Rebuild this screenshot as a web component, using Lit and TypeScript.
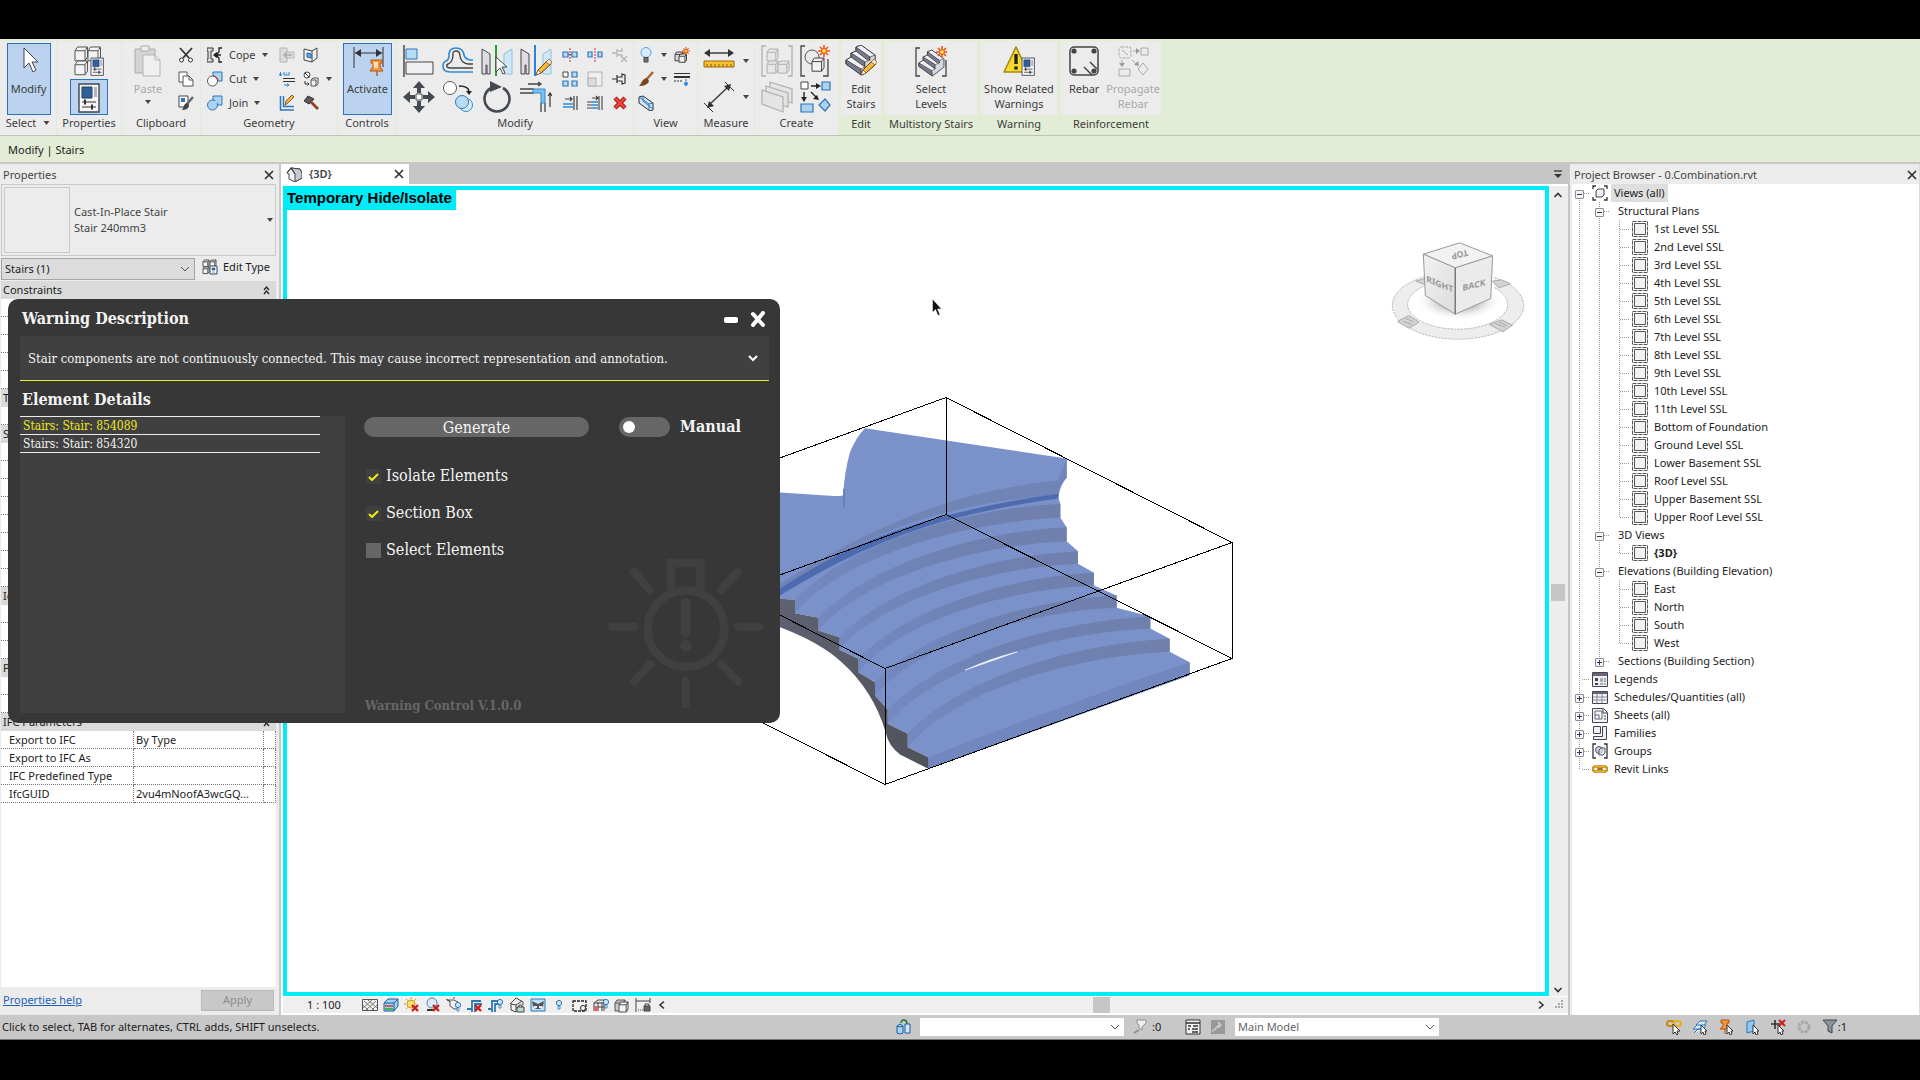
import { LitElement, html, svg, css, nothing, TemplateResult, SVGTemplateResult } from "lit";
import { customElement, state } from "lit/decorators.js";

const small = (b: SVGTemplateResult) => html`<svg class="s16" viewBox="0 0 16 16" aria-hidden="true">${b}</svg>`;
const big = (b: SVGTemplateResult) => html`<svg class="s32" viewBox="0 0 32 32" aria-hidden="true">${b}</svg>`;
const caret = html`<svg class="caret" viewBox="0 0 6 4" aria-hidden="true"><path d="M0 0h6L3 4z" fill="#444" /></svg>`;
const chevron = html`<svg class="chev" viewBox="0 0 10 6" aria-hidden="true"><path d="M1 1l4 4 4-4" fill="none" stroke="#555" /></svg>`;
const closeX = html`<svg class="x10" viewBox="0 0 10 10" aria-hidden="true"><path d="M1 1l8 8M9 1L1 9" stroke="#333" stroke-width="1.7" /></svg>`;

const burst = (x: number, y: number) => svg`<g transform="translate(${x} ${y})"><path d="M0-6V6M-6 0H6M-4-4L4 4M4-4L-4 4" stroke="#e8541c" stroke-width="1.6"/><circle r="2.4" fill="#ffe14a" stroke="#e8541c"/></g>`;
const redX = svg`<path d="M8 8l6 6M14 8l-6 6" stroke="#c8201c" stroke-width="2.4"/>`;
const tinyBulb = (x: number, y: number) => svg`<g transform="translate(${x} ${y})"><circle cx="3" cy="3" r="2.6" fill="#cfe6ff" stroke="#2f76b8"/><path d="M2 6h2v3H2z" fill="#fff" stroke="#2f76b8" stroke-width=".8"/></g>`;
const stairs = svg`<path d="M1 15l5-3V8l5-2V2l5-2 14 10v10L17 30 1 19z" fill="#f0f0f4" stroke="#33343a"/><path d="M1 15l15 9v6L1 19zM6 8l14 9v5L6 12zM11 2l14 10v5L11 6z" fill="#777a8a" stroke="#33343a" stroke-width=".8"/><path d="M16 24l4-2v-5l5-2v-3l5-2v10l-13 10z" fill="#d6d7de" stroke="#33343a" stroke-width=".6"/>`;
const pencil = svg`<path d="M16 30l2-5 9-9 4 3-10 9z" fill="#f7b93c" stroke="#6b3f12"/><path d="M16 30l2-5 3 3z" fill="#fff" stroke="#6b3f12" stroke-width=".6"/><path d="M26 17l3-3 3 3-2 3z" fill="#f4e2c8" stroke="#6b3f12" stroke-width=".6"/>`;
const cube = (x: number, y: number, s: number, f = "#f4f4f6", k = "#555") => svg`<path transform="translate(${x} ${y}) scale(${s})" d="M0 3l2-3h8v8l-2 3H0zM0 3h8v8M8 3l2-3" fill="${f}" stroke="${k}" stroke-width="${1 / s}"/>`;
const sheet = (x: number, y: number, s: number) => svg`<g transform="translate(${x} ${y}) scale(${s})"><path d="M0 0h20v28H0z" fill="#f6f6f8" stroke="#3f4450" stroke-width="1.4"/><path d="M3 3h10v11H3z" fill="#2f609a" stroke="#28405e"/><path d="M15 3h3v10h-3z" fill="#b2b6bc"/><path d="M3 18h14M3 23h14" stroke="#333" stroke-width="1.2"/><path d="M6 15.500v5M13 20.500v5" stroke="#333" stroke-width="2"/></g>`;

const icons = {
  arrow: big(svg`<path d="M11 3v20l5-5 4 9 3-2-4-8h6z" fill="#fff" stroke="#444"/>`),
  types: big(svg`${cube(2, 2, 1.25)}${cube(15, 2, 1.25)}${cube(2, 16, 1.25)}${sheet(18, 13, 0.62)}`),
  props: big(sheet(6, 2, 1)),
  paste: big(svg`<path d="M3 4h20v24H3z" fill="#d4d4d4" stroke="#aaa"/><path d="M9 1h8v5H9z" fill="#eee" stroke="#aaa"/><path d="M11 10h12l5 5v16H11z" fill="#f0f0f0" stroke="#b4b4b4"/><path d="M23 10v5h5" fill="none" stroke="#b4b4b4"/>`),
  scissors: small(svg`<path d="M2 1l9 10M14 1L5 11" stroke="#333" stroke-width="1.8"/><circle cx="3.500" cy="13" r="2" fill="#fff" stroke="#333"/><circle cx="12.500" cy="13" r="2" fill="#fff" stroke="#333"/>`),
  copy: small(svg`<path d="M1 1h8v10H1z" fill="#fff" stroke="#555"/><path d="M5 5h6l4 4v6H5z" fill="#fff" stroke="#555"/><path d="M11 5v4h4" fill="none" stroke="#555"/>`),
  match: small(svg`<path d="M1 1h9v11H1z" fill="#fff" stroke="#445"/><path d="M3 3h4v4H3z" fill="#2f76b8"/><path d="M15 2L9 9" stroke="#666" stroke-width="2.4"/><path d="M9 8l2 2c0 4-4 5-7 5 2-2 1-6 5-7z" fill="#444"/>`),
  cope: small(svg`<path d="M0 1h6v3H4v8h2v3H0v-3h1V4H0z" fill="#ddd" stroke="#333"/><path d="M15 1h-3v4l-3 3 3 3v4h3M14 8H7m3-2.500L7 8l3 2.500" fill="none" stroke="#222" stroke-width="1.3"/>`),
  cut: small(svg`<path d="M6 1h9v9H6z" fill="#a9d3ee" stroke="#2f76b8"/><circle cx="5.500" cy="10" r="5" fill="#fff" stroke="#555"/><path d="M6 5a5 5 0 0 1 5 5" fill="none" stroke="#d22"/>`),
  join: small(svg`<path d="M6 1h9v9H6z" fill="#a9d3ee" stroke="#2f76b8"/><circle cx="5.500" cy="10" r="5" fill="#a9d3ee" stroke="#2f76b8"/><path d="M7 6h3v3z" fill="#a9d3ee"/>`),
  cope2: small(svg`<path d="M1 1h7v4h7v6H8v4H1z" fill="#ddd" stroke="#b5b5b5"/><path d="M13 8H5m3-3L5 8l3 3" fill="none" stroke="#aaa" stroke-width="1.500"/>`),
  wallOpen: small(svg`<path d="M1 2l8 2 5-3v10l-5 4-8-2z" fill="#eef1f5" stroke="#444"/><path d="M4 6l4 1v4l-4-1z" fill="#6fb1ea" stroke="#1a5d9e"/><path d="M9 4v11" stroke="#444"/>`),
  split: small(svg`<path d="M1.500 1v4m-1.500-2l1.500 2L3 3M5 1v3h5V1M7 2h1" fill="none" stroke="#2a83dd"/><path d="M4 7.500h12M4 10.500h12" fill="none" stroke="#333"/><path d="M5 14h5m-2-1.500l2 1.500-2 1.500" fill="none" stroke="#2a83dd"/>`),
  shapes: small(svg`<circle cx="4" cy="4" r="3" fill="#fff" stroke="#444"/><path d="M2 2l4 4M2 10v3h4m-1.500-1.500L6 13l-1.500 1.500" fill="none" stroke="#333"/><path d="M8 9l2-2h5v6l-2 2H8zM8 9h5v6" fill="#eee" stroke="#555"/>`),
  wallEdit: small(svg`<path d="M1.500 1v14H15M4.500 1v10.500H15" fill="none" stroke="#2f76b8" stroke-width="1.500"/><path d="M6 10l1-4 6-6 2 2-6 6z" fill="#f4b43a" stroke="#553010" stroke-width=".7"/>`),
  hammer: small(svg`<path d="M1 6l4-5 6 3-5 5z" fill="#555a66" stroke="#333"/><path d="M7 6l8 8" stroke="#8a3f22" stroke-width="2.600"/>`),
  activate: big(svg`<path d="M2 2v21M31 2v20M3 8h27" stroke="#333" fill="none"/><path d="M3 8l6-4v8zM30 8l-6-4v8z" fill="#333"/><path d="M19 15h11v3h-2v4l3 4H18l3-4v-4h-2z" fill="#f49a3c" stroke="#b4500c"/><path d="M21 17h5v6h-4" fill="#ffd9a8"/><path d="M25 26v5" stroke="#b4500c" stroke-width="1.300"/>`),
  align: big(svg`<path d="M1 0v32" stroke="#222" stroke-width="1.200"/><path d="M3 4h11v10H3z" fill="#b9dcf5" stroke="#2f76b8"/><path d="M3 17h27v12H3z" fill="#f0f0f2" stroke="#444"/>`),
  offset: big(svg`<path d="M31 15h-3q-5-1-6-5-1-7-8-7T7 10q0 5-3 6-3 1-3 5 0 6 7 6h23" fill="none" stroke="#2f8ad2" stroke-width="1.600"/><path d="M31 19h-5q-7-1-8-8 0-5-4-5t-3 5q-1 7-5 8-2 1-1 3 1 1 4 1h22" fill="none" stroke="#444" stroke-width="1.400"/>`),
  mirror1: big(svg`<path d="M1 4l8 5v20H6V20H5v9H1z" fill="#dedee2" stroke="#444"/><path d="M31 4l-8 5v20h8z" fill="#cfe8f8" stroke="#8fc0e0"/><path d="M15 0v31" stroke="#2ba02b" stroke-width="2"/><path d="M15 12v15l4-4 3 6 2-1-3-6h5z" fill="#fff" stroke="#444"/>`),
  mirror2: big(svg`<path d="M1 4l8 5v20H6V20H5v9H1z" fill="#dedee2" stroke="#444"/><path d="M31 4l-8 5v20h8z" fill="#cfe8f8" stroke="#8fc0e0"/><path d="M15 0v31" stroke="#2a83dd" stroke-width="2"/>${pencil}`),
  move: big(svg`<path d="M16 0l6 7h-4v5h-4V7h-4zM16 32l6-7h-4v-5h-4v5h-4zM0 16l7-6v4h5v4H7v4zM32 16l-7-6v4h-5v4h5v4z" fill="#444952"/><path d="M13 13h6v6h-6z" fill="#fff" stroke="#444"/>`),
  copyShape: big(svg`<circle cx="8" cy="7" r="6.500" fill="#fff" stroke="#555"/><path d="M17 5c6 0 10 1 10 6" fill="none" stroke="#222" stroke-width="1.500"/><path d="M24 10h6l-3 4z" fill="#222"/><circle cx="24" cy="24" r="6.500" fill="#d8ecfa" stroke="#2f8ad2"/><circle cx="20" cy="21" r="6.500" fill="#b9dcf5" stroke="#2f76b8"/>`),
  rotate: big(svg`<path d="M10 7a12.500 12.500 0 1 0 12 0" fill="none" stroke="#444952" stroke-width="2.600"/><path d="M9 0l12 6-12 5z" fill="#444952"/>`),
  trim: big(svg`<path d="M0 8h15M0 12h15M22 31v-9M26 31v-9M9 3h13m-3-2l3 2-3 2M31 26V12m-2 3l2-3 2 3" transform="translate(-1 0)" fill="none" stroke="#444" stroke-width="1.300"/><path d="M13 8h12v14h-4V12h-8z" fill="#7cc0f0" stroke="#2f8ad2"/>`),
  split1: small(svg`<path d="M1 5h5v5H1zM10 5h5v5h-5zM6 7.500h4" fill="#b9dcf5" stroke="#2f76b8" stroke-width="1.200"/><path d="M8 1v14" stroke="#d22" stroke-dasharray="2 1"/>`),
  split2: small(svg`<path d="M1 5h4v5H1zM11 5h4v5h-4z" fill="#b9dcf5" stroke="#2f76b8" stroke-width="1.200"/><path d="M8 1v14" stroke="#d22" stroke-dasharray="2 1"/>`),
  unpin: small(svg`<path d="M0 6h5M5 2v8M5 4h5V1M5 8h5v3" fill="none" stroke="#b8b8b8" stroke-width="1.300"/><path d="M9 9l6 6M15 9l-6 6" stroke="#b8b8b8" stroke-width="1.600"/>`),
  array: small(svg`<path d="M1 1h5v5H1z" fill="#fff" stroke="#444"/><path d="M1 10h5v5H1zM10 1h5v5h-5zM10 10h5v5h-5z" fill="#b9dcf5" stroke="#2f76b8" stroke-width="1.200"/>`),
  scale: small(svg`<path d="M1 1h14v14H1z" fill="#efefef" stroke="#b0b0b0"/><path d="M1 7h8v8H1z" fill="#ddd" stroke="#b0b0b0"/>`),
  pin: small(svg`<path d="M0 8h5" stroke="#333"/><path d="M5 4v8M5 6h5V3l3 1v8l-3 1v-3H5" fill="#eee" stroke="#333" stroke-width="1.200"/>`),
  trimOne: small(svg`<path d="M3 4h7m-2-2l2 2-2 2M12 1v14M15 1v14" fill="none" stroke="#444" stroke-width="1.200"/><path d="M1 9h10M1 12h10" stroke="#2f8ad2" stroke-width="1.400"/>`),
  trimMany: small(svg`<path d="M5 3h6m-2-2l2 2-2 2M12 1v14M15 1v14M0 7h5M0 10h5M0 13h5" fill="none" stroke="#444" stroke-width="1.100"/><path d="M5 7h6M5 10h6M5 13h6" stroke="#2f8ad2" stroke-width="1.600"/>`),
  del: small(svg`<path d="M3 3l10 10M13 3L3 13" stroke="#8e1010" stroke-width="4.400"/><path d="M3 3l10 10M13 3L3 13" stroke="#f0403a" stroke-width="2.600"/>`),
  bulb: small(svg`<circle cx="8" cy="5.500" r="5" fill="#d4ecff" stroke="#5a9ed6"/><path d="M6 10.500h4V15H6z" fill="#777" stroke="#444"/>`),
  override: small(svg`${cube(1, 5, 0.8, "#d8d8dc", "#444")}${cube(5, 7, 0.75, "#eee", "#444")}<g transform="translate(12 4) scale(.65)">${burst(0, 0)}</g>`),
  brush: small(svg`<path d="M15 1L8 9" stroke="#b0692c" stroke-width="2.600"/><path d="M9 7l2 3c-1 4-6 5-10 5 3-2 2-7 8-8z" fill="#7a4420"/>`),
  linework: small(svg`<path d="M0 2.500h16" stroke="#333"/><path d="M0 6h16" stroke="#333" stroke-width="2"/><path d="M0 10h9" stroke="#333" stroke-dasharray="2 1"/><path d="M12 8v5m-2-1h4l-2 3z" fill="#2a83dd" stroke="#2a83dd"/>`),
  box3d: small(svg`<path d="M1 2l4-1 10 7v7l-3 1L1 8z" fill="#cfe4f6" stroke="#333"/><path d="M1 2l10 7v6M5 1v5l10 8M11 9l4-1" fill="none" stroke="#2f76b8"/>`),
  measure: big(svg`<path d="M3 8h26" stroke="#333" stroke-width="1.400"/><path d="M1 8l6-4v8zM31 8l-6-4v8z" fill="#333"/><path d="M1 16h30v6H1z" fill="#f6c12c" stroke="#9a6a10"/><path d="M4 19v3M8 19v3M12 19v3M16 19v3M20 19v3M24 19v3M28 19v3" stroke="#8a5a10"/>`),
  dim: big(svg`<path d="M6 24L25 6" stroke="#333" stroke-width="1.300"/><path d="M4 27l2-7 5 5zM28 3l-2 7-5-5z" fill="#333"/><path d="M1 22l9 9M22 1l9 9" stroke="#333"/>`),
  group: big(svg`<path d="M5 1H1v30h4M27 1h4v30h-4" fill="none" stroke="#b0b0b0" stroke-width="1.300"/>${cube(6, 4, 1.1, "#e6e6e6", "#b0b0b0")}${cube(6, 16, 1.1, "#e6e6e6", "#b0b0b0")}${cube(17, 16, 1.1, "#e6e6e6", "#b0b0b0")}`),
  newGroup: big(svg`<path d="M6 1H2v30h4M24 31h5V14" fill="none" stroke="#444" stroke-width="1.300"/><circle cx="13" cy="12" r="7" fill="#e8eaee" stroke="#555"/>${cube(13, 13, 1.2, "#f2f2f4", "#444")}${burst(25, 6)}`),
  parts: big(svg`<g fill="#e4e4e4" stroke="#b0b0b0" stroke-width="1.200"><path d="M9 1l22 7v14L9 15z"/><path d="M5 5l22 7v14L5 19z"/><path d="M1 9l21 7v15L1 23z"/></g>`),
  similar: big(svg`<path d="M2 1h7v7H2z" fill="#fff" stroke="#444"/><path d="M23 1h8v8h-8zM2 23h12v8H2zM26 18l5 6-5 6-6-6z" fill="#a9d3ee" stroke="#2f76b8" stroke-width="1.200"/><path d="M12 5h7M5 11v7M12 11l5 5" stroke="#222" stroke-width="1.400"/><path d="M17 2l5 3-5 3zM2 16h6l-3 5zM20 19l-6-1 4-4z" fill="#222"/>`),
  editStairs: big(svg`${stairs}${pencil}`),
  levels: big(svg`<path d="M5 3H1v28h4M27 31h4V15" fill="none" stroke="#444" stroke-width="1.300"/><g transform="translate(3 5) scale(.86)">${stairs}</g>${burst(27, 7)}`),
  warning: big(svg`<path d="M13 2L1 27h24z" fill="#f8d92c" stroke="#a58a10" stroke-width="1.600" stroke-linejoin="round"/><path d="M13 9v10M13 21.500v3" stroke="#222" stroke-width="3.400"/>${sheet(19, 13, 0.62)}`),
  rebar: big(svg`<rect x="2" y="2" width="28" height="28" rx="4" fill="none" stroke="#444" stroke-width="1.500"/><circle cx="6" cy="6" r="2.600" fill="#444"/><circle cx="26" cy="6" r="2.600" fill="#444"/><circle cx="6" cy="26" r="2.600" fill="#444"/><circle cx="26" cy="26" r="2.600" fill="#444"/><path d="M22 17l7 7M16 22l8 8" stroke="#444" stroke-width="1.500"/>`),
  propagate: big(svg`<g fill="none" stroke="#aaa"><rect x="2" y="2" width="12" height="11" rx="2" stroke-dasharray="3 1"/><path d="M5 5l6 5M24 3h7v7h-7zM2 24h11v7H2zM26 18l5 6-5 6-5-6zM16 6h4M5 15v4M15 15l5 5"/></g><path d="M19 3l4 3-4 3zM2 18h6l-3 4zM22 21l-5-1 4-4z" fill="#999"/>`),
  house: small(svg`<path d="M1 7l4-5 9 1 2 4v5l-7 4-6-3V8z" fill="#f2f3f5" stroke="#444"/><path d="M5 2l4 6v8l7-4V7l-2-4z" fill="#c6cad2" stroke="#444"/><path d="M1 7l4-5 4 6" fill="none" stroke="#444" stroke-width="1.200"/>`),
  editType: small(svg`${cube(1, 1, 0.6)}${cube(8, 1, 0.6)}${cube(1, 8, 0.6)}<path d="M8 7h7v8H8z" fill="#fff" stroke="#345"/><path d="M10 9h3v2h-3zM10 13h3" fill="#2f609a" stroke="#2f609a" stroke-width=".6"/>`),
};

const viewIcons: TemplateResult[] = [
  small(svg`<path d="M.5 2.500h15v11H.5z" fill="#f4f4f4" stroke="#555"/><path d="M2 4l10 9M6 3l9 8M1 8l5 5M14 4L4 13M10 3L1 11M15 8l-5 5" stroke="#777"/>`),
  small(svg`<path d="M1 6l4-4h10v7l-4 5H1z" fill="#9ed3ee" stroke="#1a5d9e"/><path d="M1 6h10v8M11 6l4-4" fill="none" stroke="#1a5d9e"/><path d="M2 9h8" stroke="#d33" stroke-width="1.500"/><path d="M2 12h8" stroke="#2a2" stroke-width="1.500"/>`),
  small(svg`<circle cx="7" cy="7" r="4" fill="#ffe070" stroke="#d8941c"/><path d="M7 0v2M0 7h2M2 2l1.500 1.500M12 2l-1.500 1.500M2 12l1.500-1.500" stroke="#d8941c"/>${redX}`),
  small(svg`<circle cx="7" cy="6" r="5" fill="#dcebf8" stroke="#4a7fae"/><path d="M2 13h7" stroke="#333" stroke-width="2"/>${redX}`),
  small(svg`<path d="M1 3l3 1v5l4 3h4V5L8 3zM0 2l4 3M7 1h2" fill="#eee" stroke="#555"/>${tinyBulb(9, 5)}`),
  small(svg`<path d="M5 15V4h9M8 15V7h7M0 12h5" fill="none" stroke="#2f76b8" stroke-width="1.800"/>${redX}`),
  small(svg`<path d="M4 15V4h8M7 15V7h4M0 12h4" fill="none" stroke="#2f76b8" stroke-width="1.800"/>${tinyBulb(9, 2)}`),
  small(svg`<path d="M1 7l6-6 7 4v3M2 7v6l5 2V8L13 4M2 7l5 1" fill="#eee" stroke="#444"/><path d="M8 10h7v5H8z" fill="#c4d8c8" stroke="#444"/><path d="M10 10V8h3v2" fill="none" stroke="#444"/>`),
  small(svg`<path d="M1 2h14v12H1z" fill="#bfe0f5" stroke="#2f76b8"/><path d="M2 4l6 3 6-3-1 5-3 3H6L3 9z" fill="#555"/><path d="M4 9h3v2H4zM9 9h3v2H9z" fill="#eee"/>`),
  small(svg`${tinyBulb(5, 3)}`),
  small(svg`<path d="M1 4h13v10H1z" fill="#f2f2f2" stroke="#222" stroke-dasharray="3 1" stroke-width="1.300"/><circle cx="11" cy="11" r="2.500" fill="#fff" stroke="#222"/>`),
  small(svg`<path d="M1 6l4-3h8M1 6v8M5 5v9M9 5v9M1 6h10v8M1 10h10" fill="none" stroke="#444"/><path d="M1 10h4v4H1z" fill="#d66" />${tinyBulb(10, 2)}`),
  small(svg`${cube(1, 3, 1, "#ccc")}${cube(5, 5, 0.9, "#f2f2f2")}`),
  small(svg`<path d="M1 1v14M15 1v5M1 4h14" fill="none" stroke="#444"/><path d="M3 13h5" stroke="#444" stroke-dasharray="1 1"/><path d="M9 9h6v5H9z" fill="#666" stroke="#444"/><path d="M10 9V7h4v2" fill="none" stroke="#444"/>`),
];

const pickIcons: TemplateResult[] = [
  small(svg`<rect x="1" y="2" width="7" height="5" rx="2.500" fill="none" stroke="#c88a10" stroke-width="2"/><rect x="8" y="2" width="7" height="5" rx="2.500" fill="none" stroke="#e8b020" stroke-width="2"/><path d="M7 5v10l2-2 2 3 1-1-1-3h3z" fill="#fff" stroke="#333"/>`),
  small(svg`<path d="M1 10l4-4h9l-3 4zM2 14l4-4h6M4 6l4-4h7l-3 4" fill="#dceefa" stroke="#2f76b8"/><path d="M9 6v9l2-2 1 3 2-1-1-3h2z" fill="#fff" stroke="#333"/>`),
  small(svg`<path d="M3 1h8v3h-2v3l3 3H2l3-3V4H3z" fill="#f49a3c" stroke="#b4500c"/><path d="M7 10v5" stroke="#b4500c"/><path d="M9 6v9l2-2 1 3 2-1-1-3h2z" fill="#fff" stroke="#333"/>`),
  small(svg`<path d="M3 3l7-2v11l-7 2z" fill="#8fc8f0" stroke="#2f76b8"/><path d="M9 6v9l2-2 1 3 2-1-1-3h2z" fill="#fff" stroke="#333"/>`),
  small(svg`<path d="M5 1v9M1 5h9" stroke="#333" stroke-width="1.600"/><path d="M9 1l6 6M15 1L9 7" stroke="#c8201c" stroke-width="2"/><path d="M8 6v9l2-2 1 3 2-1-1-3h2z" fill="#fff" stroke="#333"/>`),
  small(svg`<circle cx="8" cy="8" r="5" fill="none" stroke="#a8a8a8" stroke-width="3" stroke-dasharray="3 1"/>`),
];

const treeIcons: Record<string, TemplateResult> = {
  views: small(svg`<path d="M4 1H1v3M12 1h3v3M4 15H1v-3M12 15h3v-3" fill="none" stroke="#333" stroke-width="1.300"/><path d="M4 6l2-2h6v6l-2 2H4z" fill="#eee" stroke="#444"/>`),
  leaf: small(svg`<path d="M.5.5h15v15H.5z" fill="none" stroke="#555" stroke-dasharray="4 1"/><path d="M2.500 2.500h11v11h-11z" fill="#f2f2f2" stroke="#555"/>`),
  legends: small(svg`<path d="M.5 1.500h15v14H.5z" fill="#eee" stroke="#445"/><path d="M1 2h14v3H1z" fill="#667"/><path d="M3 7h3v3H3zM3 12h3v2H3z" fill="#445"/><path d="M8 8h6M8 10h6M8 13h6" stroke="#667" stroke-dasharray="3 1"/>`),
  schedules: small(svg`<path d="M.5 2.500h15v12H.5z" fill="#f4f4f4" stroke="#445"/><path d="M1 3h14v2H1z" fill="#667"/><path d="M1 8h14M1 11h14M5 5v9M10 5v9" stroke="#889"/>`),
  sheets: small(svg`<path d="M.5 1.500h11l4 4v10H.5z" fill="#f4f4f4" stroke="#445"/><path d="M3 4h7v8H3zM3 8h4v4" fill="none" stroke="#667"/><path d="M11 2v4h4M12 9h2M12 12h2" fill="none" stroke="#445"/>`),
  families: small(svg`<path d="M1.500 1.500h7v7h-7zM1.500 11.500h9v-10h4v13h-13z" fill="#eef0f3" stroke="#445"/>`),
  groups: small(svg`<path d="M4 1H1v14h3M12 1h3v14h-3" fill="none" stroke="#333" stroke-width="1.300"/><circle cx="7" cy="7" r="3.500" fill="#ccd" stroke="#556"/><path d="M7 7l2-2h4v5l-2 2H7z" fill="#dde" fill-opacity=".7" stroke="#556"/>`),
  links: small(svg`<rect x="1" y="5.500" width="8" height="5" rx="2.500" fill="none" stroke="#b87a08" stroke-width="2.400"/><rect x="7" y="5.500" width="8" height="5" rx="2.500" fill="none" stroke="#b87a08" stroke-width="2.400"/><rect x="1" y="5.500" width="8" height="5" rx="2.500" fill="none" stroke="#f2c030"/><rect x="7" y="5.500" width="8" height="5" rx="2.500" fill="none" stroke="#f2c030"/><path d="M5 8h6" stroke="#7a5208"/>`),
};

type Node = { t: string; cells: string; icon?: string; sel?: boolean; bold?: boolean };
const leaf = (t: string, last = false, bold = false): Node => ({ t, cells: last ? "vvl" : "vvt", icon: "leaf", bold });
const TREE: Node[] = [
  { t: "Views (all)", cells: "B", icon: "views", sel: true },
  { t: "Structural Plans", cells: "vM" },
  ...["1st", "2nd", "3rd", "4th", "5th", "6th", "7th", "8th", "9th", "10th", "11th"].map((n) => leaf(`${n} Level SSL`)),
  leaf("Bottom of Foundation"), leaf("Ground Level SSL"), leaf("Lower Basement SSL"), leaf("Roof Level SSL"), leaf("Upper Basement SSL"), leaf("Upper Roof Level SSL", true),
  { t: "3D Views", cells: "vM" }, leaf("{3D}", true, true),
  { t: "Elevations (Building Elevation)", cells: "vM" },
  ...["East", "North", "South"].map((n) => leaf(n)), leaf("West", true),
  { t: "Sections (Building Section)", cells: "vL" },
  { t: "Legends", cells: "t", icon: "legends" },
  { t: "Schedules/Quantities (all)", cells: "P", icon: "schedules" },
  { t: "Sheets (all)", cells: "P", icon: "sheets" },
  { t: "Families", cells: "P", icon: "families" },
  { t: "Groups", cells: "P", icon: "groups" },
  { t: "Revit Links", cells: "l", icon: "links" },
];

type Prop = { h?: string; n?: string; v?: string };
const blank = (n: number): Prop[] => Array.from({ length: n }, () => ({}));
const PROPS: Prop[] = [
  { h: "Constraints" }, ...blank(5), { h: "T" }, ...blank(1), { h: "S" }, ...blank(8), { h: "Id" }, ...blank(3), { h: "P" }, ...blank(2),
  { h: "IFC Parameters" }, { n: "Export to IFC", v: "By Type" }, { n: "Export to IFC As", v: "" }, { n: "IFC Predefined Type", v: "" }, { n: "IfcGUID", v: "2vu4mNoofA3wcGQ..." },
];

/* Tread risers: right end x, top, bottom; left end x, top, bottom. */
const RISERS = [
  [871, 370, 412, 75, 658, 698], [890, 440, 482, 145, 712, 750], [924, 512, 550, 208, 770, 808], [972, 577, 615, 265, 835, 875],
  [1040, 645, 682, 315, 905, 945], [1141, 708, 744, 353, 988, 1030], [1199, 775, 814, 413, 1060, 1100],
];
const riserPath = ([xr, t, b, xl, lt, lb]: number[]) => {
  const dx = xr - xl, dt = lt - t, db = lb - b;
  return `M${xr} ${t}C${xr - 0.38 * dx} ${t + 0.05 * dt} ${xr - 0.81 * dx} ${t + 0.44 * dt} ${xl} ${lt}V${lb}C${xr - 0.83 * dx} ${b + 0.44 * db} ${xr - 0.4 * dx} ${b + 0.05 * db} ${xr} ${b}Z`;
};

const scene = html`<svg class="scene" viewBox="287 190 1258 801" role="img" aria-label="3D view of the stair">
  <defs>
    <linearGradient id="riser" x1="0" x2="1"><stop offset="0" stop-color="#7389c0" /><stop offset=".45" stop-color="#6e82b3" /><stop offset="1" stop-color="#7080ad" /></linearGradient>
    <linearGradient id="under" x1="0" x2="1" y1="0" y2="1"><stop offset="0" stop-color="#5f6373" /><stop offset="1" stop-color="#50525a" /></linearGradient>
    <radialGradient id="shade"><stop offset=".3" stop-color="#888" stop-opacity=".8" /><stop offset="1" stop-color="#fff" stop-opacity="0" /></radialGradient>
    <linearGradient id="face" x1="0" x2="1" y1="0" y2="1"><stop offset="0" stop-color="#f2f2f2" /><stop offset="1" stop-color="#dcdcdc" /></linearGradient>
  </defs>
  <g transform="translate(770 380) scale(.33333)">
    <path fill="#7a91ca" d="M-60 332L30 336 180 346Q205 348 219 345Q224 270 240 215Q258 170 285 143L890 234V292Q870 312 865 352L871 370V412L890 440V482L924 512V550L972 577V615L1040 645V682L1141 708V744L1199 775V814L1259 845V884L475 1165V1130L413 1100V1060L353 1030V988L315 945V905L265 875V835L208 808V770L145 750V712L75 698V658L-60 650Z" />
    <path fill="#7085bd" d="M890 234V292Q870 312 865 345L862 300Q880 262 890 234Z" />
    <path fill="#7084b5" d="M865 300Q700 315 530 368Q300 440 30 610V632Q300 450 530 395Q700 355 865 342Z" />
    <path fill="#4f6bb0" d="M865 340Q700 362 530 405Q250 475 30 625V645Q280 490 530 420Q700 375 865 354Z" />
    ${RISERS.map((r) => svg`<path fill="url(#riser)" d="${riserPath(r)}"/>`)}
    <path fill="#7187be" d="M1259 845Q900 965 475 1130V1165L1259 884Z" />
    <path fill="url(#under)" d="M-60 650L30 655 75 658V698L145 712V750L208 770V808L265 835V875L315 905V945L353 988V1030L413 1060V1100L475 1130V1165L390 1122Q355 1095 347 1055Q310 930 215 845Q150 785 30 740L-60 700Z" />
    <path d="M222 325V380" stroke="#5f76b0" stroke-width="4" />
    <path d="M585 869Q660 835 742 814Q670 840 585 869Z" fill="#fff" stroke="#e8eefc" stroke-width="2" />
  </g>
  <path d="M600 523L946 397L1232 542V658L885 784L600 640ZM600 523L885 668V784M885 668L1232 542M946 397V514M600 640L946 514L1232 658" fill="none" stroke="#000" stroke-width="1" shape-rendering="crispEdges" />
  <g transform="translate(1359 160) scale(.33333)">
    <path fill-rule="evenodd" fill="#ededed" stroke="#b8b8b8" stroke-width="3" stroke-dasharray="7 3" d="M100 435a197 101 0 1 0 394 0a197 101 0 1 0 -394 0zM146 432a150 74 0 1 0 300 0a150 74 0 1 0 -300 0z" />
    <path d="M195 330H405V400H195Z" fill="#fff" />
    <ellipse cx="300" cy="420" rx="130" ry="60" fill="url(#shade)" />
    <g fill="#d4d4d4" stroke="#aaa" stroke-width="3"><path d="M115 483l35-18 30 20-30 18zM392 492l36-14 32 16-28 20zM400 362l28-4 26 12-34 12zM170 362l28-8v18z" /><path d="M132 482l26 10M140 474l24 10M410 490l28 10M420 484l24 12" /></g>
    <path fill="#f2f2f2" stroke="#999" stroke-width="3" d="M193 281L302 247L401 286L289 322Z" />
    <path fill="url(#face)" stroke="#999" stroke-width="3" d="M193 281L289 322V461L199 405Z" />
    <path fill="#ebebeb" stroke="#999" stroke-width="3" d="M401 286L289 322V461L395 414Z" />
    <path d="M289 322V461" stroke="#777" stroke-width="4" />
    <g class="cubetext" fill="#999" text-anchor="middle"><text transform="translate(242 380) skewY(22)">RIGHT</text><text transform="translate(345 383) skewY(-14)">BACK</text><text transform="translate(300 273) rotate(166)">TOP</text></g>
  </g>
  <path d="M932.500 298.500v13.500l3-3 2.500 6 2-1-2.500-5.500h4z" fill="#111" stroke="#fff" stroke-width=".5" />
</svg>`;

@customElement("warning-dialog")
export class WarningDialog extends LitElement {
  @state() private picked = "854089";
  static styles = css`
    :host { display: block; color: #f4f4f4; background: #373737; border-radius: 10px; font-family: "DejaVu Serif Condensed", "DejaVu Serif", serif; }
    * { box-sizing: border-box; }
    .dialog { display: flex; flex-direction: column; height: 100%; padding: 0 11px 10px 12px; }
    .bar { display: flex; align-items: center; height: 37px; padding: 2px 0 0 2px; margin-right: -2px; }
    h2 { flex: 1; margin: 0; font-size: 16px; font-weight: bold; line-height: 24px; }
    button { font: inherit; color: inherit; border: 0; background: none; padding: 0; }
    .win { display: grid; place-items: center; width: 27px; height: 24px; }
    .win svg { width: 16px; height: 16px; }
    .pick { display: flex; align-items: center; background: #404040; border-bottom: 1px solid #f4ec20; height: 45px; padding: 0 10px 0 8px; position: relative; }
    select { appearance: none; flex: 1; font: inherit; font-size: 13px; color: inherit; background: none; border: 0; padding: 2px 0 0; height: 44px; }
    .pick svg { position: absolute; right: 11px; width: 10px; height: 8px; }
    .head { height: 35px; padding: 7px 2px 0; flex: none; }
    .cols { flex: 1; display: grid; grid-template-columns: 325px 1fr; gap: 19px; }
    .list { margin: 0; padding: 0 25px 0 0; list-style: none; background: #404040; font-size: 12px; }
    .list li { border-top: 1px solid #ececec; height: 18px; }
    .list li:last-child { height: 19px; border-bottom: 1px solid #ececec; }
    .list button { display: block; width: 100%; text-align: left; line-height: 16px; padding: 1px 3px 0; }
    .list .on { color: #f0e81c; }
    .side { display: flex; flex-direction: column; align-items: flex-start; position: relative; font-size: 16px; }
    .run { display: flex; align-items: center; margin-top: 1px; height: 20px; }
    .gen { width: 225px; height: 20px; border-radius: 10px; background: #666; line-height: 18px; padding-top: 2px; margin-right: 30px; }
    .toggle { display: flex; align-items: center; gap: 10px; font-weight: bold; line-height: 20px; }
    .toggle input { appearance: none; margin: 0; width: 51px; height: 20px; border-radius: 10px; background: #666; display: flex; align-items: center; padding: 4px; }
    .toggle input::before { content: ""; width: 12px; height: 12px; border-radius: 50%; background: #fff; }
    .checks { display: grid; gap: 17px; margin: 29px 0 0 2px; }
    .checks label { display: flex; align-items: center; gap: 5px; height: 20px; }
    .box { position: relative; display: grid; place-items: center; width: 15px; height: 15px; }
    .box input { appearance: none; margin: 0; width: 15px; height: 15px; background: #666; grid-area: 1 / 1; }
    .box input:checked { background: #404040; }
    .box svg { grid-area: 1 / 1; width: 11px; height: 9px; z-index: 1; pointer-events: none; }
    .box input:not(:checked) + svg { display: none; }
    .ver { margin: auto 0 0 1px; font-size: 13px; font-weight: bold; line-height: 14px; color: #666; }
    .mark { position: absolute; right: 5px; bottom: 4px; width: 156px; height: 151px; }
  `;
  private check(label: string, on: boolean) {
    return html`<label><span class="box"><input type="checkbox" ?checked=${on} /><svg viewBox="0 0 11 9"><path d="M1 5l3 3 6-6" fill="none" stroke="#f4ec10" stroke-width="2" /></svg></span>${label}</label>`;
  }
  render() {
    return html`<section class="dialog" role="dialog" aria-label="Warning Description">
      <div class="bar"><h2>Warning Description</h2>
        <button class="win" aria-label="Minimize"><svg viewBox="0 0 16 16"><rect x="1" y="6" width="14" height="6" rx="2" fill="#fff" /></svg></button>
        <button class="win" aria-label="Close"><svg viewBox="0 0 16 16"><path d="M3 3l10 11M13 2L3 14" stroke="#fff" stroke-width="4" stroke-linecap="round" /></svg></button></div>
      <div class="pick"><select aria-label="Warning"><option>Stair components are not continuously connected. This may cause incorrect representation and annotation.</option></select>
        <svg viewBox="0 0 10 8"><path d="M1 2l4 4 4-4" fill="none" stroke="#fff" stroke-width="2" /></svg></div>
      <h2 class="head">Element Details</h2>
      <div class="cols">
        <ul class="list">${["854089", "854320"].map((id) => html`<li><button class=${id === this.picked ? "on" : ""} @click=${() => (this.picked = id)}>Stairs: Stair: ${id}</button></li>`)}</ul>
        <div class="side">
          <div class="run"><button class="gen">Generate</button><label class="toggle"><input type="checkbox" role="switch" />Manual</label></div>
          <div class="checks">${this.check("Isolate Elements", true)}${this.check("Section Box", true)}${this.check("Select Elements", false)}</div>
          <div class="ver">Warning Control V.1.0.0</div>
          <svg class="mark" viewBox="805 808 468 453" aria-hidden="true"><g fill="none" stroke="#404040" stroke-width="25"><circle cx="1039" cy="1020" r="115" /><path d="M994 905V823H1082V905" /></g><g stroke="#404040" stroke-width="26" stroke-linecap="round"><path d="M882 848L930 904M1194 848L1144 904M818 1014H884M1194 1014H1260M882 1180L932 1126M1196 1180L1144 1126M1038 1176V1247" stroke-width="24" /><path d="M1038 942V1030" stroke-width="30" /></g><circle cx="1038" cy="1071" r="18" fill="#404040" /></svg>
        </div>
      </div></section>`;
  }
}

@customElement("app-root")
export class AppRoot extends LitElement {
  static styles = css`
    :host { display: block; height: 100vh; background: #000; color: #1c1c1c; font: 11px/18px "Noto Sans", "Open Sans", sans-serif; }
    * { box-sizing: border-box; }
    button, select, input { font: inherit; color: inherit; }
    button { border: 0; padding: 0; background: none; }
    svg { display: block; flex: none; }
    .s16 { width: 16px; height: 16px; }
    .s32 { width: 32px; height: 32px; }
    .caret { width: 6px; height: 4px; }
    .chev { width: 10px; height: 6px; }
    .x10 { width: 10px; height: 10px; }
    .app { position: relative; height: 100%; padding: 39px 0 40px; display: flex; flex-direction: column; }

    .ribbon { display: grid; grid-template-columns: 57px 65px 79px 137px 59px 237px 64px 57px 84px 44px 96px 80px 104px 1fr; height: 97px; background: #e3ecd5; border-bottom: 1px solid #bfc4b8; color: #3c3c3c; }
    .panel { display: flex; flex-direction: column; background: #ececec; margin: 2px 1px 0 0; }
    .panel.green { background: #e3ecd5; margin: 0; }
    .body { flex: none; height: 74px; display: flex; padding-top: 2px; }
    .green .body { background: #ececec; margin: 2px 2px 0; justify-content: center; }
    .foot { height: 16px; line-height: 16px; text-align: center; display: flex; justify-content: center; align-items: center; gap: 7px; white-space: nowrap; }
    .green .foot { height: 17px; }
    .foot .caret { width: 7px; }
    .sel { justify-content: center; padding-left: 1px; }
    .tall { display: flex; flex-direction: column; align-items: center; gap: 2px; height: 72px; padding-top: 2px; line-height: 15px; min-width: 44px; }
    .tall span { padding-top: 2px; white-space: pre-line; text-align: center; }
    .tall .caret { margin-top: 2px; }
    .on { background: #bbd3ee; border: 1px solid #2c71bd; padding-top: 1px; }
    .off { color: #a9a9a9; }
    .act { min-width: 49px; }
    .pair { display: grid; grid-template-rows: 36px 36px; }
    .pair button { display: flex; align-items: center; justify-content: center; gap: 6px; width: 38px; }
    .propsw { justify-content: center; }
    .trio { display: grid; grid-template-rows: repeat(3, 24px); grid-auto-flow: column; align-content: start; }
    .trio button { display: flex; align-items: center; justify-content: center; width: 24px; }
    .trio .wide { width: 68px; justify-content: flex-start; gap: 6px; }
    .trio .caretcell { width: 12px; }
    .clip .tall { width: 52px; }
    .geo { padding-left: 6px; }
    .mod { padding-left: 2px; }
    .mod .pair button { width: 39px; }
    .mod .trio { margin-left: 2px; }
    .mod .trio button { width: 25px; }
    .meas .pair button { width: 52px; margin-left: 3px; gap: 8px; justify-content: flex-start; padding-left: 2px; }
    .create { padding-left: 3px; }
    .options { height: 28px; line-height: 28px; padding-left: 8px; background: #e3ecd5; border-bottom: 2px solid #c8c8c8; color: #222; }

    .work { flex: 1; min-height: 0; display: grid; grid-template-columns: 281px 1fr 352px; }
    .props { display: flex; flex-direction: column; background: #ececec; border-right: 2px solid #c9c9c9; padding: 0 3px 0 1px; min-height: 0; }
    .title { display: flex; align-items: center; justify-content: space-between; height: 20px; padding: 1px 2px 0; color: #444; }
    .type { display: flex; align-items: center; gap: 4px; height: 72px; padding: 2px 2px; border: 1px solid #c9c9c9; color: #444; line-height: 16px; }
    .thumb { width: 66px; height: 66px; border: 1px solid #c9c9c9; }
    .type div:nth-child(2) { flex: 1; }
    .pickrow { display: flex; align-items: center; gap: 7px; height: 25px; }
    .combo { position: relative; display: flex; align-items: center; }
    .combo select { appearance: none; width: 100%; height: 100%; border: 0; background: none; padding: 0 3px; border-radius: 0; }
    .combo .chev { position: absolute; right: 4px; pointer-events: none; }
    .pickrow .combo { width: 194px; height: 22px; background: #dcdcdc; border: 1px solid #a5a5a5; }
    .edit { display: flex; align-items: center; gap: 5px; height: 22px; padding-bottom: 3px; }
    .grid { flex: 1; min-height: 0; overflow: hidden; background: #fff; }
    table { width: 100%; border-collapse: separate; border-spacing: 0; table-layout: fixed; }
    .c1 { width: 133px; } .c3 { width: 12px; }
    th, td { padding: 0; font-weight: normal; text-align: left; height: 18px; line-height: 17px; }
    .cat th { background: #dadada; padding: 0 2px; line-height: 18px; }
    .cat div { display: flex; justify-content: space-between; align-items: center; padding-right: 4px; }
    .cat svg { width: 7px; height: 9px; }
    td, .name { border-bottom: 1px dotted #777; border-right: 1px dotted #777; }
    .name { padding-left: 8px; } td { padding-left: 2px; }
    .help { display: flex; align-items: center; justify-content: space-between; height: 28px; padding: 0 2px 2px; }
    .help a { color: #1c62b4; }
    .help button { width: 73px; height: 21px; background: #c8c8c8; border: 1px solid #b8b8b8; color: #8c8c8c; }

    .mid { display: grid; grid-template-rows: 20px 1fr 19px; min-width: 0; min-height: 0; background: #fff; }
    .tabs { display: flex; justify-content: space-between; align-items: center; background: #c6c6c6; padding-right: 5px; }
    .tab { display: flex; align-items: center; gap: 7px; width: 128px; height: 20px; background: #fff; padding: 0 5px 0 5px; font-weight: 600; color: #444; }
    .tab span { flex: 1; }
    .canvas { display: flex; min-height: 0; padding: 2px 0 0 2px; }
    .port { position: relative; flex: 1; min-width: 0; border: 4px solid #00ecf8; background: #fff; overflow: hidden; }
    .scene { position: absolute; inset: 0; width: 100%; height: 100%; }
    .cubetext { font: bold 26px "Noto Sans", sans-serif; }
    .temp { position: absolute; left: 0; top: 0; background: #00ecf8; color: #000; height: 20px; padding: 0 4px 0 0; font: bold 15px/16px "Liberation Sans", Arial, sans-serif; }
    .vscroll { width: 19px; display: flex; flex-direction: column; align-items: center; justify-content: space-between; background: #ededed; padding: 6px 3px 3px 1px; }
    .thumbv { width: 14px; height: 17px; background: #c6c6c6; }
    .bottom { display: flex; align-items: center; background: #efefef; border-bottom: 2px solid #fff; border-top: 1px solid #fff; margin-left: 2px; }
    .scale { width: 79px; padding-left: 24px; }
    .vicons { display: flex; gap: 5px; }
    .left { margin-left: 6px; }
    .track { flex: 1; height: 16px; display: flex; justify-content: center; }
    .track i { width: 17px; height: 16px; background: #c6c6c6; }
    .grip { margin: 0 4px 0 8px; }

    .browser { display: flex; flex-direction: column; background: #fff; border-left: 2px solid #c6c6c6; min-height: 0; border-right: 1px solid #ddd; }
    .browser .title { background: #ececec; padding: 1px 2px 0 4px; }
    .tree { margin: 0; padding: 0; list-style: none; border-left: 2px solid #ececec; flex: 1; }
    .tree li { display: flex; align-items: center; height: 18px; }
    .cell { position: relative; width: 20px; height: 18px; display: grid; place-items: center; flex: none; }
    .cell:first-child { width: 18px; }
    .cell::before { content: ""; position: absolute; left: 9px; top: 0; bottom: 0; width: 1px; background: repeating-linear-gradient(#999 0 1px, transparent 1px 2px); }
    .cell:first-child::before { left: 7px; }
    .cell.half::before { bottom: 8px; }
    .cell.lower::before { top: 8px; }
    .cell.arm::after { content: ""; position: absolute; left: 10px; right: 0; top: 9px; height: 1px; background: repeating-linear-gradient(90deg, #999 0 1px, transparent 1px 2px); }
    .exp { position: relative; z-index: 1; width: 9px; height: 9px; border: 1px solid #8c8c8c; border-radius: 1px; background: #f6f6f6; display: grid; place-items: center; margin: 2px 1px 0 0; }
    .exp svg { width: 5px; height: 5px; }
    .cell:first-child .exp { margin-right: 3px; }
    .tree .s16 { margin: 0 6px 0 2px; }
    .tree .txt { white-space: nowrap; }
    .tree .noicon { margin-left: 8px; }
    .tree .bold { font-weight: bold; }
    .tree .chosen { background: #dedede; margin-left: -3px; padding: 0 3px; }

    .status { display: flex; align-items: center; height: 25px; background: #c8c8c8; border-bottom: 1px solid #777; white-space: nowrap; }
    .msg { width: 896px; padding-left: 2px; }
    .status .combo { width: 204px; height: 18px; background: #fff; color: #666; }
    .status .combo select { line-height: 16px; }
    .count { width: 35px; padding-left: 2px; }
    .g9 { margin-left: 8px; } .g12 { margin: 0 9px; } .g2 { margin: 0 2px 0 8px; }
    .picks { margin-left: auto; display: flex; align-items: center; gap: 10px; padding-right: 73px; }
    .picks span { margin-left: -10px; }
    warning-dialog { position: absolute; left: 8px; top: 299px; width: 772px; height: 424px; }
  `;

  private panel(name: string, body: TemplateResult, green = false, cls = "") {
    return html`<section class="panel ${green ? "green" : ""}" aria-label=${name}><div class="body ${cls}">${body}</div><div class="foot">${name}${name === "Select" ? caret : nothing}</div></section>`;
  }
  private b(label: string, icon: TemplateResult, drop = false) {
    return html`<button aria-label=${label}>${icon}${drop ? caret : nothing}</button>`;
  }
  private ribbon() {
    const i = icons, b = this.b;
    const w = (t: string, ic: TemplateResult) => html`<button class="wide">${ic}<span>${t}</span>${caret}</button>`;
    const drop = (t: string) => html`<button class="caretcell" aria-label=${t}>${caret}</button>`;
    const none = html`<span></span>`;
    return html`<header class="ribbon">
      ${this.panel("Select", html`<button class="tall on">${i.arrow}<span>Modify</span></button>`, false, "sel")}
      ${this.panel("Properties", html`<div class="pair">${b("Type properties", i.types)}<button class="on" aria-label="Properties">${i.props}</button></div>`, false, "propsw")}
      ${this.panel("Clipboard", html`<button class="tall off">${i.paste}<span>Paste</span>${caret}</button><div class="trio">${b("Cut to clipboard", i.scissors)}${b("Copy", i.copy)}${b("Match type", i.match)}</div>`, false, "clip")}
      ${this.panel("Geometry", html`<div class="trio">${w("Cope", i.cope)}${w("Cut", i.cut)}${w("Join", i.join)}${b("Join roof", i.cope2)}${b("Split face", i.split)}${b("Wall joins", i.wallEdit)}${b("Wall opening", i.wallOpen)}${b("Paint", i.shapes)}${b("Demolish", i.hammer)}${none}${drop("Paint options")}</div>`, false, "geo")}
      ${this.panel("Controls", html`<button class="tall on act">${i.activate}<span>Activate</span></button>`, false, "sel")}
      ${this.panel("Modify", html`
        <div class="pair">${b("Align", i.align)}${b("Move", i.move)}</div><div class="pair">${b("Offset", i.offset)}${b("Copy", i.copyShape)}</div>
        <div class="pair">${b("Mirror pick axis", i.mirror1)}${b("Rotate", i.rotate)}</div><div class="pair">${b("Mirror draw axis", i.mirror2)}${b("Trim", i.trim)}</div>
        <div class="trio">${b("Split", i.split1)}${b("Array", i.array)}${b("Trim single", i.trimOne)}${b("Split with gap", i.split2)}${b("Scale", i.scale)}${b("Trim multiple", i.trimMany)}${b("Unpin", i.unpin)}${b("Pin", i.pin)}${b("Delete", i.del)}</div>`, false, "mod")}
      ${this.panel("View", html`<div class="trio">${b("Hide", i.bulb)}${b("Override", i.brush)}${b("Selection box", i.box3d)}${drop("Hide options")}${drop("Override options")}${none}${b("Displace", i.override)}${b("Linework", i.linework)}</div>`, false, "view")}
      ${this.panel("Measure", html`<div class="pair">${b("Measure", i.measure, true)}${b("Dimension", i.dim, true)}</div>`, false, "meas")}
      ${this.panel("Create", html`<div class="pair">${b("Assembly", i.group)}${b("Parts", i.parts)}</div><div class="pair">${b("Group", i.newGroup)}${b("Similar", i.similar)}</div>`, false, "create")}
      ${this.panel("Edit", html`<button class="tall">${i.editStairs}<span>Edit
Stairs</span></button>`, true)}
      ${this.panel("Multistory Stairs", html`<button class="tall">${i.levels}<span>Select
Levels</span></button>`, true)}
      ${this.panel("Warning", html`<button class="tall">${i.warning}<span>Show Related
Warnings</span></button>`, true)}
      ${this.panel("Reinforcement", html`<button class="tall">${i.rebar}<span>Rebar</span></button><button class="tall off">${i.propagate}<span>Propagate
Rebar</span></button>`, true)}
    </header>`;
  }
  private cell(c: string) {
    const cls = { v: "", t: "arm", l: "arm half", B: "arm lower", M: "arm", L: "arm half", P: "arm" }[c];
    const exp = c === "B" || c === "M" ? svg`<path d="M0 2.500h5" stroke="#336"/>` : c === "L" || c === "P" ? svg`<path d="M0 2.500h5M2.500 0v5" stroke="#336"/>` : null;
    return html`<span class="cell ${cls}">${exp ? html`<button class="exp" aria-label="Toggle"><svg viewBox="0 0 5 5">${exp}</svg></button>` : nothing}</span>`;
  }
  render() {
    return html`<div class="app">
      ${this.ribbon()}
      <div class="options">Modify | Stairs</div>
      <main class="work">
        <aside class="props">
          <div class="title"><span>Properties</span><button aria-label="Close properties">${closeX}</button></div>
          <div class="type"><div class="thumb"></div><div>Cast-In-Place Stair<br />Stair 240mm3</div>${caret}</div>
          <div class="pickrow"><div class="combo"><select aria-label="Filter"><option>Stairs (1)</option></select>${chevron}</div><button class="edit">${icons.editType}Edit Type</button></div>
          <div class="grid"><table><colgroup><col class="c1" /><col /><col class="c3" /></colgroup><tbody>
            ${PROPS.map((p) => p.h
              ? html`<tr class="cat"><th colspan="3"><div>${p.h}<svg viewBox="0 0 7 9"><path d="M1 4l2.500-3L6 4M1 8l2.500-3L6 8" fill="none" stroke="#222" stroke-width="1.300" /></svg></div></th></tr>`
              : html`<tr><th class="name" scope="row">${p.n}</th><td>${p.v}</td><td></td></tr>`)}
          </tbody></table></div>
          <div class="help"><a href="#help">Properties help</a><button disabled>Apply</button></div>
        </aside>
        <section class="mid">
          <div class="tabs"><div class="tab">${icons.house}<span>{3D}</span><button aria-label="Close view">${closeX}</button></div>
            <button aria-label="Tab list"><svg class="x10" viewBox="0 0 10 10"><path d="M1 2h8" stroke="#333" stroke-width="1.300" /><path d="M1 5h8L5 9z" fill="#333" /></svg></button></div>
          <div class="canvas"><div class="port">${scene}<div class="temp">Temporary Hide/Isolate</div></div>
            <div class="vscroll"><svg class="chev" viewBox="0 0 10 6"><path d="M1.500 5L5 1.500 8.500 5" fill="none" stroke="#333" stroke-width="1.700" /></svg><span class="thumbv"></span><svg class="chev" viewBox="0 0 10 6"><path d="M1.500 1L5 4.500 8.500 1" fill="none" stroke="#333" stroke-width="1.700" /></svg></div></div>
          <div class="bottom"><span class="scale">1 : 100</span><div class="vicons">${viewIcons.map((v) => html`<button aria-label="View control">${v}</button>`)}</div>
            <svg class="x10 left" viewBox="0 0 10 10"><path d="M7 1.500L3 5l4 3.500" fill="none" stroke="#333" stroke-width="1.600" /></svg><div class="track"><i></i></div>
            <svg class="x10" viewBox="0 0 10 10"><path d="M3 1.500L7 5 3 8.500" fill="none" stroke="#333" stroke-width="1.600" /></svg><svg class="x10 grip" viewBox="0 0 10 10"><path d="M7 1h2M4 4h2M7 4h2M1 7h2M4 7h2M7 7h2" stroke="#aaa" stroke-width="2" /></svg></div>
        </section>
        <aside class="browser">
          <div class="title"><span>Project Browser - 0.Combination.rvt</span><button aria-label="Close browser">${closeX}</button></div>
          <ul class="tree">${TREE.map((n) => html`<li>${[...n.cells].map((c) => this.cell(c))}${n.icon ? treeIcons[n.icon] : nothing}<span class="txt ${n.icon ? "" : "noicon"} ${n.bold ? "bold" : ""} ${n.sel ? "chosen" : ""}">${n.t}</span></li>`)}</ul>
        </aside>
      </main>
      <footer class="status"><span class="msg">Click to select, TAB for alternates, CTRL adds, SHIFT unselects.</span>
        ${small(svg`<path d="M1 7l3-2 3 2v7l-3 1-3-1zM1 7l3 1 3-1" fill="#a9d3ee" stroke="#1a5d9e"/><path d="M5 4c0-4 6-4 6 1" fill="none" stroke="#2a7a2a" stroke-width="1.600"/><path d="M9 5h5v9H9z" fill="#cfe6ff" stroke="#1a5d9e"/>`)}
        <span class="combo g9"><select aria-label="Workset"><option></option></select>${chevron}</span>
        <span class="g2">${small(svg`<path d="M5 1h9v3l-4 4v3L7 9V6L5 4z" fill="#eee" stroke="#909090"/><path d="M2 14l5-3" stroke="#909090" stroke-width="2"/>`)}</span><span class="count">:0</span>
        ${small(svg`<path d="M1 1h14v14H1z" fill="#f4f4f4" stroke="#333"/><path d="M1 4h14M3 7h3M3 10h2M8 7h5M7 10h6M7 13h6" stroke="#333" stroke-width="1.300"/>`)}
        <span class="g12">${small(svg`<path d="M1 1h14v14H1z" fill="#999"/><path d="M2 12c4 0 4-6 8-6m-2-3l3 3-3 3" fill="none" stroke="#ccc" stroke-width="1.500"/>`)}</span>
        <span class="combo"><select aria-label="Design option"><option>Main Model</option></select>${chevron}</span>
        <div class="picks">${pickIcons.map((p) => html`<button aria-label="Selection option">${p}</button>`)}${small(svg`<path d="M1 1h14l-5 6v7l-4-2V7z" fill="#8a93a0" stroke="#444"/>`)}<span>:1</span></div>
      </footer>
      <warning-dialog></warning-dialog>
    </div>`;
  }
}
